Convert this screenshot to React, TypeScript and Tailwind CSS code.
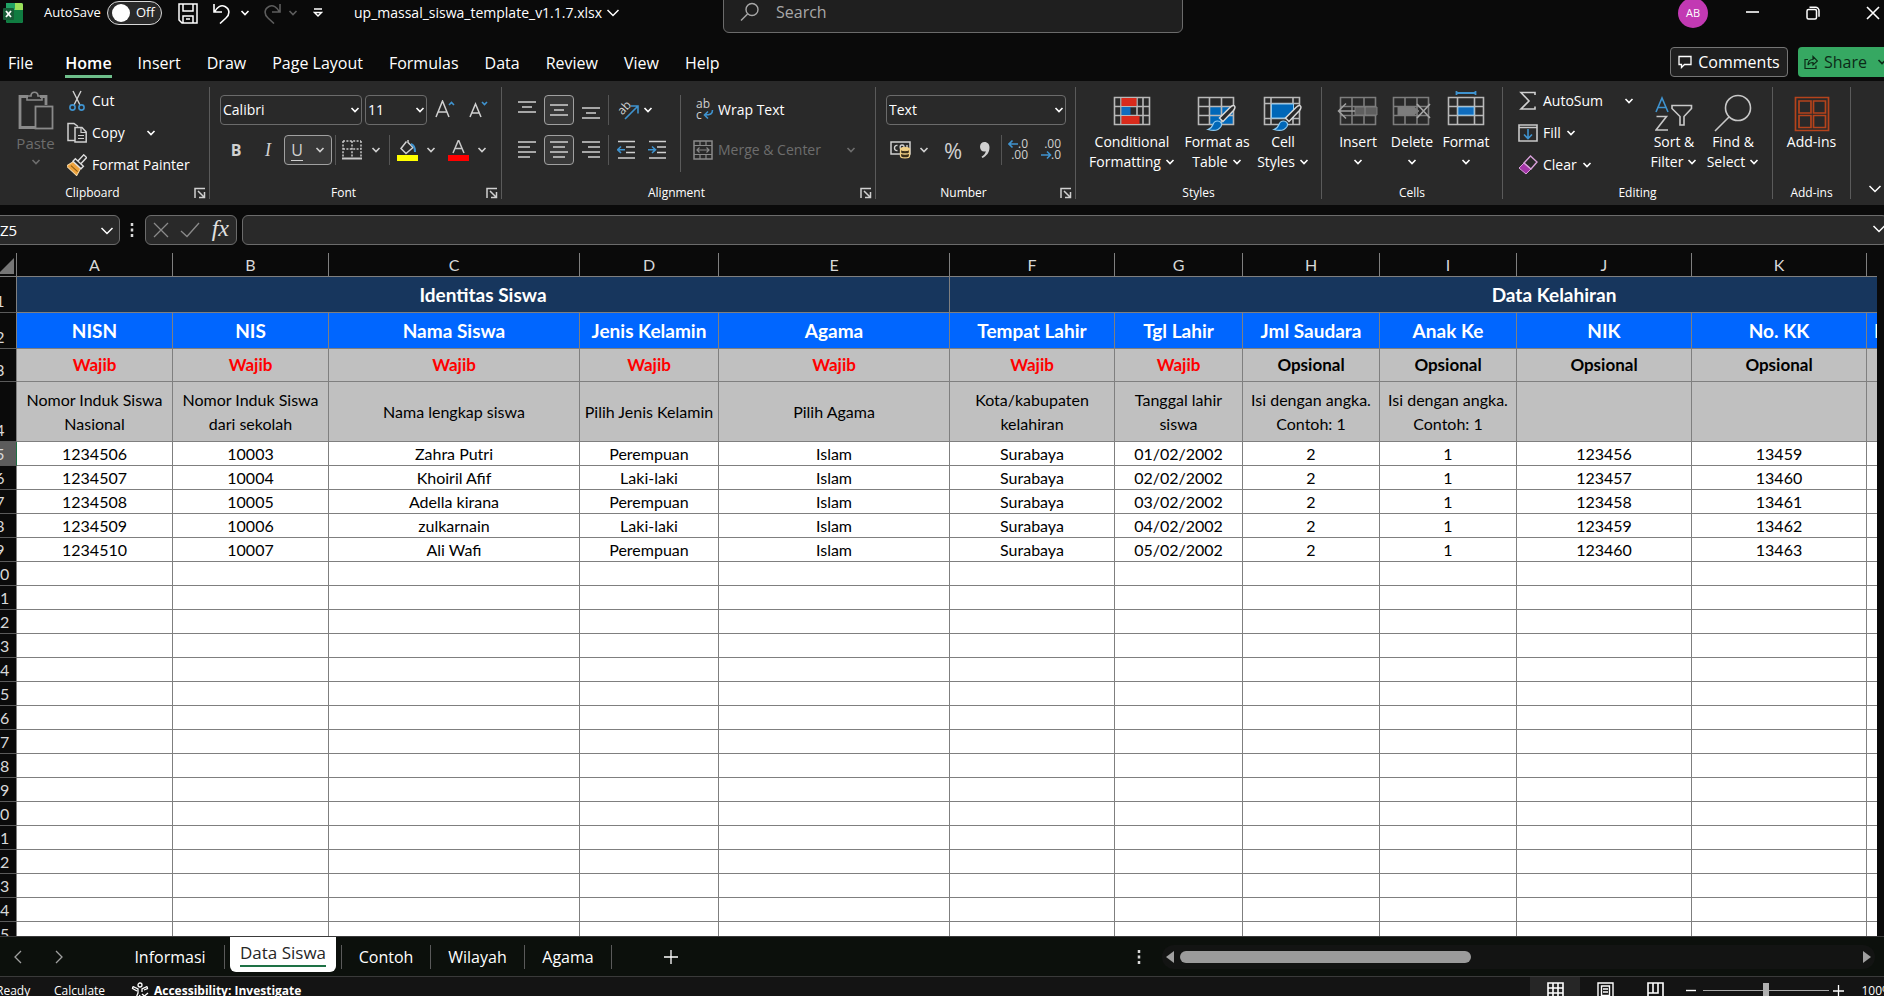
import type { ReactNode } from 'react';

const COLUMNS = [
  { letter: 'A', width: 156, title: 'NISN', rule: 'Wajib', hint: 'Nomor Induk Siswa Nasional' },
  { letter: 'B', width: 156, title: 'NIS', rule: 'Wajib', hint: 'Nomor Induk Siswa dari sekolah' },
  { letter: 'C', width: 251, title: 'Nama Siswa', rule: 'Wajib', hint: 'Nama lengkap siswa' },
  { letter: 'D', width: 139, title: 'Jenis Kelamin', rule: 'Wajib', hint: 'Pilih Jenis Kelamin' },
  { letter: 'E', width: 231, title: 'Agama', rule: 'Wajib', hint: 'Pilih Agama' },
  { letter: 'F', width: 165, title: 'Tempat Lahir', rule: 'Wajib', hint: 'Kota/kabupaten kelahiran' },
  { letter: 'G', width: 128, title: 'Tgl Lahir', rule: 'Wajib', hint: 'Tanggal lahir siswa' },
  { letter: 'H', width: 137, title: 'Jml Saudara', rule: 'Opsional', hint: 'Isi dengan angka. Contoh: 1' },
  { letter: 'I', width: 137, title: 'Anak Ke', rule: 'Opsional', hint: 'Isi dengan angka. Contoh: 1' },
  { letter: 'J', width: 175, title: 'NIK', rule: 'Opsional', hint: '' },
  { letter: 'K', width: 175, title: 'No. KK', rule: 'Opsional', hint: '' },
  { letter: 'L', width: 292, title: 'No. Registrasi Akta Lahir', rule: '', hint: '' },
];

const STUDENTS = [
  ['1234506', '10003', 'Zahra Putri', 'Perempuan', 'Islam', 'Surabaya', '01/02/2002', '2', '1', '123456', '13459', ''],
  ['1234507', '10004', 'Khoiril Afif', 'Laki-laki', 'Islam', 'Surabaya', '02/02/2002', '2', '1', '123457', '13460', ''],
  ['1234508', '10005', 'Adella kirana', 'Perempuan', 'Islam', 'Surabaya', '03/02/2002', '2', '1', '123458', '13461', ''],
  ['1234509', '10006', 'zulkarnain', 'Laki-laki', 'Islam', 'Surabaya', '04/02/2002', '2', '1', '123459', '13462', ''],
  ['1234510', '10007', 'Ali Wafi', 'Perempuan', 'Islam', 'Surabaya', '05/02/2002', '2', '1', '123460', '13463', ''],
];

const EMPTY_ROWS = Array.from({ length: 16 }, (_, i) => i + 10);

const MENU = ['File', 'Home', 'Insert', 'Draw', 'Page Layout', 'Formulas', 'Data', 'Review', 'View', 'Help'];

type IconProps = { className?: string };

function Svg({ w, h, className = '', children }: { w: number; h: number; className?: string; children: ReactNode }) {
  return (
    <svg width={w} height={h} viewBox={`0 0 ${w} ${h}`} fill="none" stroke="currentColor" className={`shrink-0 ${className}`} aria-hidden="true">
      {children}
    </svg>
  );
}

function Chevron({ className = '' }: IconProps) {
  return (
    <Svg w={10} h={6} className={className}>
      <path d="M1.500 1l3.500 3.600L8.500 1" strokeWidth="1.600" />
    </Svg>
  );
}

function WideChevron({ className = '' }: IconProps) {
  return (
    <Svg w={14} h={8} className={className}>
      <path d="M1.500 1l5.500 5.500L12.500 1" strokeWidth="1.500" />
    </Svg>
  );
}

function Divider() {
  return <div className="h-[30px] w-px shrink-0 bg-[#555555]" />;
}

function PasteIcon() {
  return (
    <Svg w={36} h={40} className="text-[#8a8a8a]">
      <path d="M10 5.500H2V36.500H17M22 5.500h6V14" strokeWidth="2.800" />
      <path d="M9 9V5h4c0-5 7-5 7 0h4v4z" strokeWidth="1.600" />
      <rect x="17.500" y="15.500" width="17" height="22" strokeWidth="1.800" />
    </Svg>
  );
}

function CutIcon() {
  return (
    <Svg w={20} h={22}>
      <path d="M6 1l7 14M14 1L7 15" stroke="#d0d0d0" strokeWidth="1.400" />
      <circle cx="5.500" cy="17.500" r="2.600" stroke="#3f93cf" strokeWidth="1.600" />
      <circle cx="14.500" cy="17.500" r="2.600" stroke="#3f93cf" strokeWidth="1.600" />
    </Svg>
  );
}

function CopyIcon() {
  return (
    <Svg w={20} h={22} className="text-[#d0d0d0]">
      <path d="M8 18.500H1V1.500h6l4 3" strokeWidth="1.500" />
      <path d="M8 5.500h7l4.200 4.500v10H8z" strokeWidth="1.500" />
      <path d="M14 5.500v5h5M11 13.500h6M11 16.500h6" strokeWidth="1.200" />
    </Svg>
  );
}

function PainterIcon() {
  return (
    <Svg w={20} h={22}>
      <g transform="rotate(43 10 11)">
        <path d="M5 11h10l2 8H3z" fill="#f0a33c" stroke="#f5dcae" />
        <path d="M6 15.500h9" stroke="#8a5a12" />
        <path d="M4.500 7.500h11v3.500h-11zM8 7.500V-1h4v8.500" fill="#292929" stroke="#e0e0e0" strokeWidth="1.400" />
      </g>
    </Svg>
  );
}

function LauncherIcon() {
  return (
    <Svg w={12} h={12} className="text-[#d0d0d0]">
      <path d="M1 11V1.500h10M4 4l6 6M10.500 5v5.500H5" strokeWidth="1.500" />
    </Svg>
  );
}

function BordersIcon() {
  return (
    <Svg w={20} h={20} className="text-[#c8c8c8]">
      <path d="M1 1h18M1 1v16M19 1v16M10 1v16M1 9h18" strokeWidth="1.500" strokeDasharray="2 1.400" />
      <path d="M0 18.500h20" strokeWidth="2" />
    </Svg>
  );
}

function FillColorIcon() {
  return (
    <Svg w={21} h={21}>
      <path d="M9.500 1.500L4 8.500l5 5 7-6-5-5V0" stroke="#d0d0d0" strokeWidth="1.500" />
      <path d="M14 4c3 1 4 4 4 8" stroke="#3f93cf" strokeWidth="2" />
      <rect y="15" width="21" height="6" fill="#ffff00" stroke="none" />
    </Svg>
  );
}

function FontColorIcon() {
  return (
    <Svg w={21} h={21}>
      <path d="M5 13L10.500 0 16 13M7 8.500h7" stroke="#c8c8c8" strokeWidth="1.500" />
      <rect y="15" width="21" height="6" fill="#ff0000" stroke="none" />
    </Svg>
  );
}

function GrowFontIcon() {
  return (
    <Svg w={20} h={20}>
      <path d="M1 17L7.500 1 14 17M3 12h9" stroke="#d0d0d0" strokeWidth="1.500" />
      <path d="M14 5l2.500-2.500L19 5" stroke="#3f93cf" strokeWidth="1.600" />
    </Svg>
  );
}

function ShrinkFontIcon() {
  return (
    <Svg w={20} h={20}>
      <path d="M2 17L7.500 4 13 17M4 13h7" stroke="#d0d0d0" strokeWidth="1.500" />
      <path d="M14 2l2.500 2.500L19 2" stroke="#3f93cf" strokeWidth="1.600" />
    </Svg>
  );
}

function LinesIcon({ d }: { d: string }) {
  return (
    <Svg w={18} h={20} className="text-[#d0d0d0]">
      <path d={d} strokeWidth="1.500" />
    </Svg>
  );
}

function OrientationIcon() {
  return (
    <Svg w={22} h={22}>
      <text x="0" y="12" transform="rotate(-48 8 8)" fill="#d0d0d0" stroke="none" fontSize="12" fontFamily="Open Sans, sans-serif">ab</text>
      <path d="M8 20L20.500 7.500M13.500 7h7.500v7.500" stroke="#3f93cf" strokeWidth="1.600" />
    </Svg>
  );
}

function WrapIcon() {
  return (
    <Svg w={21} h={24}>
      <text x="3" y="10" fill="#d0d0d0" stroke="none" fontSize="12" fontFamily="Open Sans, sans-serif">ab</text>
      <text x="3" y="21" fill="#d0d0d0" stroke="none" fontSize="12" fontFamily="Open Sans, sans-serif">c</text>
      <path d="M19.500 12c0 4-2 5-8 5M15 13.500L11.500 17l3.500 3.500" stroke="#3f93cf" strokeWidth="1.600" />
    </Svg>
  );
}

function MergeIcon() {
  return (
    <Svg w={20} h={20} className="text-[#8a8a8a]">
      <rect x="1" y="1" width="18" height="18" strokeWidth="1.500" />
      <path d="M1 5.500h18M1 14.500h18M7 1v4.500M13 1v4.500M7 14.500V19M13 14.500V19M4 10h12M6.500 7.500L4 10l2.500 2.500M13.500 7.500L16 10l-2.500 2.500" strokeWidth="1.200" />
    </Svg>
  );
}

function IndentIcon({ right }: { right?: boolean }) {
  return (
    <Svg w={19} h={20}>
      <path d="M1 1.500h17M9 7h9M9 12.500h9M1 18h17" stroke="#d0d0d0" strokeWidth="1.500" />
      <path d={right ? 'M0 9.750h7M4 6.500l3.500 3.250L4 13' : 'M8 9.750H1M4 6.500L.700 9.750 4 13'} stroke="#3f93cf" strokeWidth="1.600" />
    </Svg>
  );
}

function AccountingIcon() {
  return (
    <Svg w={21} h={18}>
      <rect x="1" y="1" width="19" height="12" stroke="#d0d0d0" strokeWidth="1.500" />
      <path d="M7.500 4.500c-4-1-4 6 0 5M12 9c-2.500-1-2.500-5 0-5s2 2 2 3M17 4v3" stroke="#d0d0d0" strokeWidth="1.400" />
      <path d="M10.500 8v7c0 2.500 9 2.500 9 0V8z" fill="#3a2f1a" stroke="#f0cf86" strokeWidth="1.300" />
      <path d="M10.500 11.500c0 2 9 2 9 0" stroke="#f0cf86" strokeWidth="1.300" />
      <ellipse cx="15" cy="8" rx="4.500" ry="1.700" fill="#f0cf86" stroke="#f0cf86" />
    </Svg>
  );
}

function DecimalIcon({ more }: { more?: boolean }) {
  return (
    <Svg w={21} h={24}>
      <g fill="#d0d0d0" stroke="none" fontSize="12" fontFamily="Open Sans, sans-serif">
        <text x="20" y="10" textAnchor="end">{more ? '.0' : '.00'}</text>
        <text x="20" y="21" textAnchor="end">{more ? '.00' : '.0'}</text>
      </g>
      <path d={more ? 'M10 6H1.500M4.500 2.500L1 6l3.500 3.500' : 'M0 17h9M6 13.500L9.500 17 6 20.500'} stroke="#3f93cf" strokeWidth="1.600" />
    </Svg>
  );
}

function BrushOverlay() {
  return (
    <>
      <path d="M37.500 10c1.200 1 0 3-1 4.500L26 25.500 22.500 22 33 11.500c1.500-1.500 3.500-2.500 4.500-1.500z" fill="#292929" stroke="#d8d8d8" strokeWidth="1.500" />
      <path d="M20.500 25c3 0 5 2.500 3.500 5.500-2.500 4-8 4.500-13 3 3-1 4-2.500 5-5 .8-2.500 2.500-3.500 4.500-3.500z" fill="#0067b8" stroke="#8ecbf2" strokeWidth="1.200" />
    </>
  );
}

function ConditionalIcon() {
  return (
    <Svg w={38} h={36}>
      <path d="M1.500 1.500h35v27h-35zM8 1.500v27M24 1.500v27M30 1.500v27M1.500 10.500h35M1.500 19.500h35" stroke="#b8b8b8" strokeWidth="1.600" />
      <path d="M8.500 2h15v8h-15zM8.500 20h18v8h-18z" fill="#d92b1c" stroke="none" />
      <path d="M8.500 11h9v8h-9z" fill="#0f6cbd" stroke="none" />
    </Svg>
  );
}

function FormatTableIcon() {
  return (
    <Svg w={40} h={36}>
      <path d="M12.500 10.500h24v18h-24z" fill="#0067b8" stroke="none" />
      <path d="M1.500 1.500h35v27h-35zM12.500 1.500v27M24.500 1.500v27M1.500 10.500h35M1.500 19.500h35" stroke="#b8b8b8" strokeWidth="1.600" />
      <BrushOverlay />
    </Svg>
  );
}

function CellStylesIcon() {
  return (
    <Svg w={40} h={36}>
      <path d="M1.500 1.500h35v27h-35zM8 1.500v27M30 1.500v27M1.500 7.500h35M1.500 22.500h35" stroke="#b8b8b8" strokeWidth="1.600" />
      <path d="M8.500 8h22v14h-22z" fill="#0067b8" stroke="#8ecbf2" strokeWidth="1" />
      <BrushOverlay />
    </Svg>
  );
}

function InsertIcon() {
  return (
    <Svg w={42} h={36} className="text-[#7d7d7d]">
      <path d="M3.500 1.500h35v27h-35zM15 1.500v27M27 1.500v27M3.500 10.500h35M3.500 19.500h35" strokeWidth="1.600" />
      <path d="M18 11h22v8H18z" fill="#5f5f5f" />
      <path d="M28 11v8" stroke="#8a8a8a" />
      <path d="M18 15H2M9 7.500L1.500 15 9 22.500" stroke="#a0a0a0" strokeWidth="1.500" />
    </Svg>
  );
}

function DeleteIcon() {
  return (
    <Svg w={40} h={36} className="text-[#7d7d7d]">
      <path d="M1.500 1.500h35v27h-35zM13 1.500v27M25 1.500v27M1.500 10.500h35M1.500 19.500h35" strokeWidth="1.600" />
      <path d="M6 11h16l5 4-5 4H6z" fill="#7d7d7d" />
      <path d="M25 8l13 14M38 8L25 22" stroke="#a8a8a8" strokeWidth="1.600" />
    </Svg>
  );
}

function FormatIcon() {
  return (
    <Svg w={38} h={42}>
      <path d="M9.500 3h19M9.500 1v4M28.500 1v4" stroke="#3f93cf" strokeWidth="1.800" />
      <path d="M1.500 7.500h35v27h-35zM10.500 7.500v27M27.500 7.500v27M1.500 16.500h35M1.500 25.500h35" stroke="#b8b8b8" strokeWidth="1.600" />
      <path d="M11 17h16v8H11z" fill="#0f6cbd" stroke="#8ecbf2" strokeWidth=".8" />
    </Svg>
  );
}

function SumIcon() {
  return (
    <Svg w={20} h={20} className="text-[#d0d0d0]">
      <path d="M17 4V1.500H3l8 8.500-8 8h14v-2.500" strokeWidth="1.600" />
    </Svg>
  );
}

function FillDownIcon() {
  return (
    <Svg w={20} h={18}>
      <path d="M1 1h18v16H1zM1 3.500h18" stroke="#c8c8c8" strokeWidth="1.600" />
      <path d="M10 5v9M6 10.500l4 4 4-4" stroke="#3f93cf" strokeWidth="1.600" />
    </Svg>
  );
}

function EraserIcon() {
  return (
    <Svg w={20} h={20}>
      <path d="M1 13l5-5 7 6-5 5z" fill="#a435a8" stroke="#d8a0da" />
      <path d="M6 8l6.500-7L19 7l-6 7z" stroke="#d8a0da" strokeWidth="1.400" />
    </Svg>
  );
}

function SortIcon() {
  return (
    <Svg w={38} h={36}>
      <path d="M1 16L7 2l6 14M3 11.500h8" stroke="#3f93cf" strokeWidth="1.600" />
      <path d="M1.500 20.500h10L1 34h12" stroke="#c8c8c8" strokeWidth="1.600" />
      <path d="M17 9.500h19.500v3L29 20.500V29h-4v-8.500l-8-8z" stroke="#c8c8c8" strokeWidth="1.600" />
    </Svg>
  );
}

function FindIcon() {
  return (
    <Svg w={38} h={38} className="text-[#c8c8c8]">
      <circle cx="24" cy="14" r="12.500" strokeWidth="1.600" />
      <path d="M15 23L1 37" strokeWidth="1.600" />
    </Svg>
  );
}

function AddinsIcon() {
  return (
    <Svg w={36} h={36} className="text-[#b5431c]">
      <path d="M1.500 1.500h33v33h-33zM5 5h12v12H5zM19.500 5h12v12h-12zM5 19.500h12v12H5zM19.500 19.500h12v12h-12z" strokeWidth="1.700" />
    </Svg>
  );
}

function Group({ label, width, launcher, children }: { label: string; width: string; launcher?: boolean; children: ReactNode }) {
  return (
    <section aria-label={label} className={`flex h-full shrink-0 ${width}`}>
      <div className="flex min-w-0 flex-1 flex-col">
        <div className="h-[104px]">{children}</div>
        <div className="flex h-4 items-center">
          <span className="flex-1 text-center text-xs leading-4">{label}</span>
          {launcher && (
            <button aria-label={`${label} settings`} className="flex w-6 justify-start pl-[9px]">
              <LauncherIcon />
            </button>
          )}
        </div>
      </div>
      <div className="my-1.5 w-px bg-[#5a5a5a]" />
    </section>
  );
}

function BigButton({ icon, lines, width, plain }: { icon: ReactNode; lines: string[]; width: string; plain?: boolean }) {
  return (
    <button className={`flex shrink-0 flex-col items-center text-sm leading-5 ${width}`}>
      <span className="flex h-[51px] items-end justify-center">{icon}</span>
      <span>{lines[0]}</span>
      <span className="flex h-5 items-center gap-1">
        {lines[1]}
        {!plain && <Chevron />}
      </span>
    </button>
  );
}

function Picker({ label, value, width }: { label: string; value: string; width: string }) {
  return (
    <div className={`relative h-[30px] shrink-0 ${width}`}>
      <select aria-label={label} defaultValue={value} className="h-full w-full appearance-none rounded border border-[#6b6b6b] bg-[#292929] pl-0.5 text-sm text-white">
        <option>{value}</option>
      </select>
      <Chevron className="pointer-events-none absolute top-3 right-0.5" />
    </div>
  );
}

function TitleBar() {
  return (
    <header className="-mt-[11px] flex h-12 shrink-0 items-center">
      <div className="flex w-[723px] shrink-0 items-center pl-[3px]">
        <Svg w={20} h={20}>
          <rect x="3" y="0" width="17" height="20" rx="2" fill="#33c481" stroke="none" />
          <path d="M3 0h9v6H3z" fill="#21a366" stroke="none" />
          <path d="M12 0h6a2 2 0 012 2v5h-8z" fill="#9be05a" stroke="none" />
          <path d="M3 7h17v11a2 2 0 01-2 2H5a2 2 0 01-2-2z" fill="#107c41" stroke="none" />
          <rect x="0" y="5" width="11" height="12" rx="1" fill="#185c37" stroke="none" />
          <path d="M3 8l5 6M8 8l-5 6" stroke="#fff" strokeWidth="1.800" />
        </Svg>
        <span className="ml-[21px] w-[54px] text-[13px]">AutoSave</span>
        <button role="switch" aria-checked="false" aria-label="AutoSave" className="ml-[9px] flex h-6 w-[55px] items-center rounded-full border border-[#d8d8d8] bg-[#292929] pl-1 text-[13px]">
          <span className="h-[18px] w-[18px] rounded-full bg-white" />
          <span className="ml-1.5">Off</span>
        </button>
        <button aria-label="Save" className="ml-4">
          <Svg w={20} h={21}>
            <path d="M1 1h18v19H4l-3-3zM5 1v7h10V1M5 20v-7h10v7M8 16h4" strokeWidth="1.500" />
          </Svg>
        </button>
        <button aria-label="Undo" className="ml-3.5 flex items-center gap-2">
          <Svg w={20} h={21}>
            <path d="M2 1v8h8M2.500 9C5 4 9 1.500 13 3.500c5 2.500 5 8 1 11.500l-6 5.500" strokeWidth="1.600" />
          </Svg>
          <Chevron />
        </button>
        <button aria-label="Redo" className="ml-3 flex items-center gap-1.5 text-[#5d5d5d]">
          <Svg w={20} h={21}>
            <path d="M18 1v8h-8M17.500 9C15 4 11 1.500 7 3.500c-5 2.500-5 8-1 11.500l6 5.500" strokeWidth="1.600" />
          </Svg>
          <Chevron />
        </button>
        <button aria-label="Customize Quick Access Toolbar" className="ml-[15px]">
          <Svg w={10} h={10}>
            <path d="M1 1h8M1.500 4.500L5 8l3.500-3.500z" strokeWidth="1.500" />
          </Svg>
        </button>
        <button className="ml-[31px] flex items-center gap-1 text-sm whitespace-nowrap">
          up_massal_siswa_template_v1.1.7.xlsx
          <WideChevron />
        </button>
      </div>
      <label className="flex h-[39px] w-[460px] items-center rounded-md border border-[#6b6b6b] bg-[#1f1f1f] pb-0.5 pl-4 text-[#a8a8a8]">
        <Svg w={20} h={20}>
          <circle cx="12" cy="7.500" r="6" strokeWidth="1.400" />
          <path d="M7.500 12L1 18.500" strokeWidth="1.400" />
        </Svg>
        <input aria-label="Search" placeholder="Search" className="ml-4 w-full bg-transparent text-base outline-none placeholder:text-[#a8a8a8]" />
      </label>
      <div className="flex flex-1 items-center justify-end">
        <span className="flex h-[30px] w-[30px] items-center justify-center rounded-full bg-[#c239b3] text-[11px]">AB</span>
        <button aria-label="Minimize" className="ml-[38px]">
          <Svg w={14} h={14}><path d="M0 6h13" strokeWidth="1.600" /></Svg>
        </button>
        <button aria-label="Restore" className="ml-[46px]">
          <Svg w={14} h={14}>
            <rect x="1" y="3.500" width="9.500" height="9.500" rx="1.500" strokeWidth="1.500" />
            <path d="M3.500 1.200h6a3.500 3.500 0 013.500 3.500v6" strokeWidth="1.500" />
          </Svg>
        </button>
        <button aria-label="Close" className="mr-1 ml-[46px]">
          <Svg w={14} h={14}><path d="M1 1l12 12M13 1L1 13" strokeWidth="1.600" /></Svg>
        </button>
      </div>
    </header>
  );
}

function MenuBar() {
  return (
    <div className="flex h-11 shrink-0 items-center justify-between pt-1.5">
      <nav className="flex items-center gap-[26px] pt-1 pl-2">
        {MENU.map((item) => (
          <button
            key={item}
            className={`border-b-[3px] text-base leading-6 ${item === 'Home' ? 'border-[#6fbf8b] font-semibold' : 'border-transparent'} ${item === 'File' ? 'mr-1.5' : ''}`}
          >
            {item}
          </button>
        ))}
      </nav>
      <div className="-mr-2 flex items-center gap-2.5">
        <button className="flex h-[30px] w-[118px] items-center justify-center gap-1.5 rounded border border-[#757575] bg-[#1f1f1f] text-base">
          <Svg w={14} h={14}>
            <path d="M1 1.500h12v8H6.500L3.500 12.500v-3H1z" strokeWidth="1.300" />
          </Svg>
          Comments
        </button>
        <button className="flex h-[30px] w-[94px] items-center gap-1.5 rounded bg-[#36a862] pl-1.5 text-base text-[#0c2a17]">
          <Svg w={14} h={15}>
            <path d="M4 4.500H1v9h11v-3M4 10c0-4 2-5.500 5-5.500V1.500L13.500 6 9 10V7.500C7 7.500 5 8 4 10z" strokeWidth="1.200" />
          </Svg>
          Share
          <Chevron className="ml-1" />
        </button>
      </div>
    </div>
  );
}

function Ribbon() {
  return (
    <div className="flex h-[124px] shrink-0 overflow-hidden bg-[#292929]">
      <Group label="Clipboard" width="w-[210px]" launcher>
        <div className="flex">
          <button className="flex w-[67px] flex-col items-center pt-2.5 pl-1 text-[#6d6d6d]">
            <PasteIcon />
            <span className="mt-0.5 text-[15px] leading-5">Paste</span>
            <Chevron className="mt-1.5" />
          </button>
          <div className="flex flex-col pt-1 text-sm">
            <button className="flex h-8 items-center gap-[5px]"><CutIcon />Cut</button>
            <button className="flex h-8 items-center gap-[5px]"><CopyIcon />Copy<Chevron className="ml-4" /></button>
            <button className="flex h-8 items-center gap-[5px]"><PainterIcon />Format Painter</button>
          </div>
        </div>
      </Group>

      <Group label="Font" width="w-[292px]" launcher>
        <div className="flex flex-col gap-2.5 pt-3.5 pl-2.5">
          <div className="flex items-center">
            <Picker label="Font name" value="Calibri" width="w-[142px]" />
            <div className="ml-[3px]"><Picker label="Font size" value="11" width="w-[62px]" /></div>
            <button aria-label="Increase font size" className="ml-2"><GrowFontIcon /></button>
            <button aria-label="Decrease font size" className="ml-[13px]"><ShrinkFontIcon /></button>
          </div>
          <div className="flex h-[30px] items-center text-[#d0d0d0]">
            <button className="w-8 text-base font-bold">B</button>
            <button className="w-8 font-['Liberation_Serif',serif] text-lg italic">I</button>
            <button className="flex h-[30px] w-12 items-center justify-center gap-3 rounded border border-[#a0a0a0] bg-[#383838] text-base">
              <span className="border-b border-[#d0d0d0] leading-5">U</span>
              <Chevron />
            </button>
            <span className="ml-[3px]"><Divider /></span>
            <button aria-label="Borders" className="ml-1.5 flex items-center gap-[9px]"><BordersIcon /><Chevron /></button>
            <span className="ml-2"><Divider /></span>
            <button aria-label="Fill color" className="ml-[7px] flex items-center gap-2"><FillColorIcon /><Chevron /></button>
            <button aria-label="Font color" className="ml-3 flex items-center gap-2"><FontColorIcon /><Chevron /></button>
          </div>
        </div>
      </Group>

      <Group label="Alignment" width="w-[374px]" launcher>
        <div className="flex pt-3.5 pl-4">
          <div className="flex w-[162px] flex-col gap-2.5">
            <div className="flex h-[30px] items-center gap-2">
              <button aria-label="Top align"><LinesIcon d="M0 2h18M4 7h10M0 12h18" /></button>
              <button aria-label="Middle align" className="flex h-[30px] w-[30px] items-center justify-center rounded border border-[#a0a0a0] bg-[#383838]">
                <LinesIcon d="M0 5h18M4 10h10M0 15h18" />
              </button>
              <button aria-label="Bottom align"><LinesIcon d="M0 8h18M4 13h10M0 18h18" /></button>
              <Divider />
              <button aria-label="Orientation" className="flex items-center gap-1"><OrientationIcon /><Chevron /></button>
            </div>
            <div className="flex h-[30px] items-center gap-2">
              <button aria-label="Align left"><LinesIcon d="M0 2h18M0 7h12M0 12h18M0 17h12" /></button>
              <button aria-label="Center" className="flex h-[30px] w-[30px] items-center justify-center rounded border border-[#a0a0a0] bg-[#383838]">
                <LinesIcon d="M0 2h18M3 7h12M0 12h18M3 17h12" />
              </button>
              <button aria-label="Align right"><LinesIcon d="M0 2h18M6 7h12M0 12h18M6 17h12" /></button>
              <Divider />
              <button aria-label="Decrease indent"><IndentIcon /></button>
              <button aria-label="Increase indent" className="ml-1"><IndentIcon right /></button>
            </div>
          </div>
          <div className="mr-3 h-[77px] w-px bg-[#5a5a5a]" />
          <div className="flex flex-col gap-2.5 text-sm">
            <button className="flex h-[30px] items-center gap-1"><WrapIcon />Wrap Text</button>
            <button className="flex h-[30px] items-center gap-[5px] text-[#6d6d6d]"><MergeIcon />Merge &amp; Center<Chevron className="ml-5" /></button>
          </div>
        </div>
      </Group>

      <Group label="Number" width="w-[200px]" launcher>
        <div className="flex flex-col gap-2.5 pt-3.5 pl-2.5">
          <Picker label="Number format" value="Text" width="w-[180px]" />
          <div className="flex h-[30px] items-center text-[#d0d0d0]">
            <button aria-label="Accounting format" className="ml-1 flex items-center gap-2"><AccountingIcon /><Chevron /></button>
            <button className="ml-3.5 w-5 text-[22px] leading-6">%</button>
            <button aria-label="Comma style" className="ml-4">
              <Svg w={12} h={18}>
                <path d="M5.500 1C8.500 1 10.500 3.300 10.500 6.500c0 5-3 8.500-7 10.500l-1-1.200c2.500-1.500 4-3.500 4.300-5.500C3.500 11.500 1 9 1 5.800 1 3 3 1 5.500 1z" fill="#d0d0d0" stroke="none" />
              </Svg>
            </button>
            <span className="ml-2.5"><Divider /></span>
            <button aria-label="Increase decimal" className="ml-1.5"><DecimalIcon more /></button>
            <button aria-label="Decrease decimal" className="ml-3"><DecimalIcon /></button>
          </div>
        </div>
      </Group>

      <Group label="Styles" width="w-[246px]">
        <div className="flex pl-2">
          <BigButton icon={<ConditionalIcon />} lines={['Conditional', 'Formatting']} width="w-24" />
          <BigButton icon={<FormatTableIcon />} lines={['Format as', 'Table']} width="w-[74px]" />
          <BigButton icon={<CellStylesIcon />} lines={['Cell', 'Styles']} width="w-[58px]" />
        </div>
      </Group>

      <Group label="Cells" width="w-[181px]">
        <div className="flex pl-[9px]">
          <BigButton icon={<InsertIcon />} lines={['Insert', '']} width="w-[54px]" />
          <BigButton icon={<DeleteIcon />} lines={['Delete', '']} width="w-[54px]" />
          <BigButton icon={<FormatIcon />} lines={['Format', '']} width="w-[54px]" />
        </div>
      </Group>

      <Group label="Editing" width="w-[270px]">
        <div className="flex pl-[15px]">
          <div className="flex w-[126px] flex-col pt-1 text-sm">
            <button className="flex h-8 items-center gap-[5px]"><SumIcon />AutoSum<Chevron className="ml-4" /></button>
            <button className="flex h-8 items-center gap-[5px]"><FillDownIcon />Fill<Chevron /></button>
            <button className="flex h-8 items-center gap-[5px]"><EraserIcon />Clear<Chevron /></button>
          </div>
          <BigButton icon={<SortIcon />} lines={['Sort &', 'Filter']} width="w-[60px]" />
          <BigButton icon={<FindIcon />} lines={['Find &', 'Select']} width="w-[58px]" />
        </div>
      </Group>

      <Group label="Add-ins" width="w-[78px]">
        <BigButton icon={<AddinsIcon />} lines={['Add-ins', '']} width="w-full" plain />
      </Group>

      <button aria-label="Collapse ribbon" className="mb-3 ml-[17px] self-end"><WideChevron /></button>
    </div>
  );
}

function FormulaBar() {
  return (
    <div className="-mr-1 -ml-2 flex h-12 shrink-0 items-start pt-2.5">
      <label className="relative block h-[30px] w-32">
        <input aria-label="Name box" defaultValue="Z5" className="h-full w-full rounded-md border border-[#6b6b6b] bg-[#292929] pl-[7px] text-[15px]" />
        <WideChevron className="pointer-events-none absolute top-3 right-1.5" />
      </label>
      <Svg w={4} h={30} className="mr-[11px] ml-2.5">
        <path d="M2 8v3M2 13.500v3M2 19v3" stroke="#d8d8d8" strokeWidth="2.500" />
      </Svg>
      <div className="flex h-[30px] w-[92px] items-center justify-between rounded-md border border-[#6b6b6b] bg-[#292929] px-[7px]">
        <button aria-label="Cancel" className="text-[#8a8a8a]">
          <Svg w={16} h={16}><path d="M1 1l14 14M15 1L1 15" strokeWidth="1.300" /></Svg>
        </button>
        <button aria-label="Enter" className="text-[#8a8a8a]">
          <Svg w={20} h={16}><path d="M1 9l6 5.500L19 1" strokeWidth="1.300" /></Svg>
        </button>
        <button className="pb-1 font-['Liberation_Serif',serif] text-2xl leading-6 text-[#e0e0e0] italic">fx</button>
      </div>
      <label className="relative ml-[5px] block h-[30px] flex-1">
        <input aria-label="Formula" className="h-full w-full rounded-md border border-[#6b6b6b] bg-[#292929] px-2" />
        <WideChevron className="pointer-events-none absolute top-2.5 right-0.5" />
      </label>
    </div>
  );
}

function RowNumber({ n, active }: { n: number; active?: boolean }) {
  return (
    <th scope="row" className={`border-r border-b border-b-[#5a5a5a] p-0 align-bottom leading-[23px] font-normal text-[#d8d8d8] ${active ? 'border-r-[#1e7145] bg-[#5c5c5c]' : 'border-r-[#7f7f7f] bg-[#0a0a0a]'}`}>
      {n}
    </th>
  );
}

function Sheet() {
  return (
    <main className="mr-[7px] min-h-0 flex-1 overflow-hidden font-[Lato,sans-serif] text-base">
      <table className="-ml-4 w-[2175px] table-fixed border-separate border-spacing-0 text-center text-black">
        <colgroup>
          <col className="w-[33px]" />
          {COLUMNS.map((c) => (
            <col key={c.letter} style={{ width: c.width }} />
          ))}
        </colgroup>
        <thead>
          <tr className="h-6 text-base text-[#d8d8d8]">
            <th className="border-r border-b border-[#7f7f7f] p-0">
              <Svg w={16} h={16} className="mt-0.5 ml-3.5">
                <path d="M16 0v16H0z" fill="#767676" stroke="none" />
              </Svg>
            </th>
            {COLUMNS.map((c) => (
              <th key={c.letter} scope="col" className="border-r border-b border-[#7f7f7f] p-0 pt-px leading-[22px] font-normal">
                {c.letter}
              </th>
            ))}
          </tr>
        </thead>
        <tbody>
          <tr className="h-9">
            <RowNumber n={1} />
            <td colSpan={5} className="border-r border-b border-[#7f7f7f] bg-[#17365d] p-0 text-[19px] leading-6 font-bold text-white">Identitas Siswa</td>
            <td colSpan={7} className="border-r border-b border-[#7f7f7f] bg-[#17365d] p-0 text-[19px] leading-6 font-bold text-white">Data Kelahiran</td>
          </tr>
          <tr className="h-9">
            <RowNumber n={2} />
            {COLUMNS.map((c) => (
              <td key={c.letter} className="border-r border-b border-[#7f7f7f] bg-[#0066ff] p-0 text-[19px] leading-6 font-bold whitespace-nowrap text-white last:pl-[7px] last:text-left">{c.title}</td>
            ))}
          </tr>
          <tr className="h-[33px]">
            <RowNumber n={3} />
            {COLUMNS.map((c) => (
              <td key={c.letter} className={`border-r border-b border-[#7f7f7f] bg-[#c0c0c0] p-0 text-[17px] leading-6 font-bold ${c.rule === 'Wajib' ? 'text-[#ff0000]' : ''}`}>{c.rule}</td>
            ))}
          </tr>
          <tr className="h-[60px]">
            <RowNumber n={4} />
            {COLUMNS.map((c) => (
              <td key={c.letter} className="border-r border-b border-[#7f7f7f] bg-[#c0c0c0] p-0 leading-6">{c.hint}</td>
            ))}
          </tr>
          {STUDENTS.map((student, i) => (
            <tr key={student[0]} className="h-6">
              <RowNumber n={i + 5} active={i === 0} />
              {student.map((value, j) => (
                <td key={j} className="border-r border-b border-[#7f7f7f] bg-white p-0 leading-[23px]">{value}</td>
              ))}
            </tr>
          ))}
          {EMPTY_ROWS.map((n) => (
            <tr key={n} className="h-6">
              <RowNumber n={n} />
              {COLUMNS.map((c) => (
                <td key={c.letter} className="border-r border-b border-[#7f7f7f] bg-white p-0" />
              ))}
            </tr>
          ))}
        </tbody>
      </table>
    </main>
  );
}

function SheetTabs() {
  return (
    <div className="flex h-10 shrink-0 items-center border-t border-[#3a3a3a] bg-[#0c100c] text-base">
      <button aria-label="Previous sheet" className="ml-3.5 text-[#a0a0a0]">
        <Svg w={8} h={14}><path d="M7 1L1 7l6 6" strokeWidth="1.300" /></Svg>
      </button>
      <button aria-label="Next sheet" className="ml-[33px] text-[#a0a0a0]">
        <Svg w={8} h={14}><path d="M1 1l6 6-6 6" strokeWidth="1.300" /></Svg>
      </button>
      <div className="ml-[53px] flex h-full items-center">
        <button className="w-[108px]">Informasi</button>
        <div className="h-6 w-px bg-[#5a5a5a]" />
        <button className="ml-[5px] flex h-[35px] w-[106px] items-start justify-center self-start rounded-b-md bg-white pt-[3px] text-[#262626]">
          <span className="border-b-2 border-[#1e7145] text-[17px] leading-[25px]">Data Siswa</span>
        </button>
        <div className="ml-[5px] h-6 w-px bg-[#5a5a5a]" />
        <button className="w-[88px]">Contoh</button>
        <div className="h-6 w-px bg-[#5a5a5a]" />
        <button className="w-[93px]">Wilayah</button>
        <div className="h-6 w-px bg-[#5a5a5a]" />
        <button className="w-[86px]">Agama</button>
        <div className="h-6 w-px bg-[#5a5a5a]" />
      </div>
      <button aria-label="New sheet" className="ml-[52px]">
        <Svg w={14} h={14}><path d="M0 7h14M7 0v14" strokeWidth="1.300" /></Svg>
      </button>
      <div className="mr-[9px] ml-auto flex w-[738px] items-center">
        <Svg w={4} h={14}><path d="M2 0v3M2 5.500v3M2 11v3" stroke="#d8d8d8" strokeWidth="2.500" /></Svg>
        <div className="ml-[21px] flex h-6 flex-1 items-center gap-1.5 rounded-full bg-[#131413] px-1 text-[#a0a0a0]">
          <button aria-label="Scroll left"><Svg w={8} h={12}><path d="M8 0v12L0 6z" fill="currentColor" stroke="none" /></Svg></button>
          <div className="h-3 flex-1"><div className="h-full w-[43%] rounded-md bg-[#9b9b9b]" /></div>
          <button aria-label="Scroll right"><Svg w={8} h={12}><path d="M0 0v12l8-6z" fill="currentColor" stroke="none" /></Svg></button>
        </div>
      </div>
    </div>
  );
}

function StatusBar() {
  return (
    <footer className="-mb-2 flex h-7 shrink-0 items-center border-t border-[#3a3a3a] bg-[#141414] text-xs">
      <span className="-ml-1 w-[58px]">Ready</span>
      <span className="w-[77px]">Calculate</span>
      <button className="flex items-center gap-1 font-bold">
        <Svg w={19} h={18}>
          <circle cx="9" cy="3" r="2" strokeWidth="1.300" />
          <path d="M2 4.500l5 2.500v4l-2.500 6M16 4.500L11 7v3M2 4.500l-.5 2L6 9M16 4.500l.5 2L13 8M7 17l2-4M11 12l6 5M17 11l-7 6" strokeWidth="1.300" />
        </Svg>
        Accessibility: Investigate
      </button>
      <div className="-mr-2 ml-auto flex h-full items-center">
        <button aria-label="Normal view" className="flex h-full w-[50px] items-center justify-center bg-[#262626]">
          <Svg w={17} h={17}><path d="M1 1h15v15H1zM6 1v15M11 1v15M1 6h15M1 11h15" strokeWidth="1.600" /></Svg>
        </button>
        <button aria-label="Page layout view" className="flex h-full w-[50px] items-center justify-center">
          <Svg w={17} h={17}><path d="M1 1h15v15H1zM4.500 4h8v9.500h-8zM6 7h5M6 10h5" strokeWidth="1.400" /></Svg>
        </button>
        <button aria-label="Page break preview" className="flex h-full w-[50px] items-center justify-center">
          <Svg w={17} h={17}><path d="M1 16V1h15v15M1 11h10V1M6 1v10" strokeWidth="1.600" /></Svg>
        </button>
        <button aria-label="Zoom out" className="ml-1.5"><Svg w={11} h={11}><path d="M0 5.500h10" strokeWidth="1.400" /></Svg></button>
        <input
          type="range"
          aria-label="Zoom"
          className="ml-1.5 h-4 w-[126px] appearance-none bg-[linear-gradient(#a8a8a8,#a8a8a8)] bg-[length:100%_1px] bg-center bg-no-repeat [&::-webkit-slider-thumb]:h-4 [&::-webkit-slider-thumb]:w-1.5 [&::-webkit-slider-thumb]:appearance-none [&::-webkit-slider-thumb]:bg-[#b0b0b0]"
        />
        <button aria-label="Zoom in" className="ml-1"><Svg w={12} h={12}><path d="M0 6h11M5.500 0v12" strokeWidth="1.300" /></Svg></button>
        <span className="ml-4">100%</span>
      </div>
    </footer>
  );
}

export default function App() {
  return (
    <div className="flex h-screen flex-col overflow-hidden bg-[#0a0a0a] font-['Open_Sans',sans-serif] text-white">
      <TitleBar />
      <MenuBar />
      <Ribbon />
      <FormulaBar />
      <Sheet />
      <SheetTabs />
      <StatusBar />
    </div>
  );
}
